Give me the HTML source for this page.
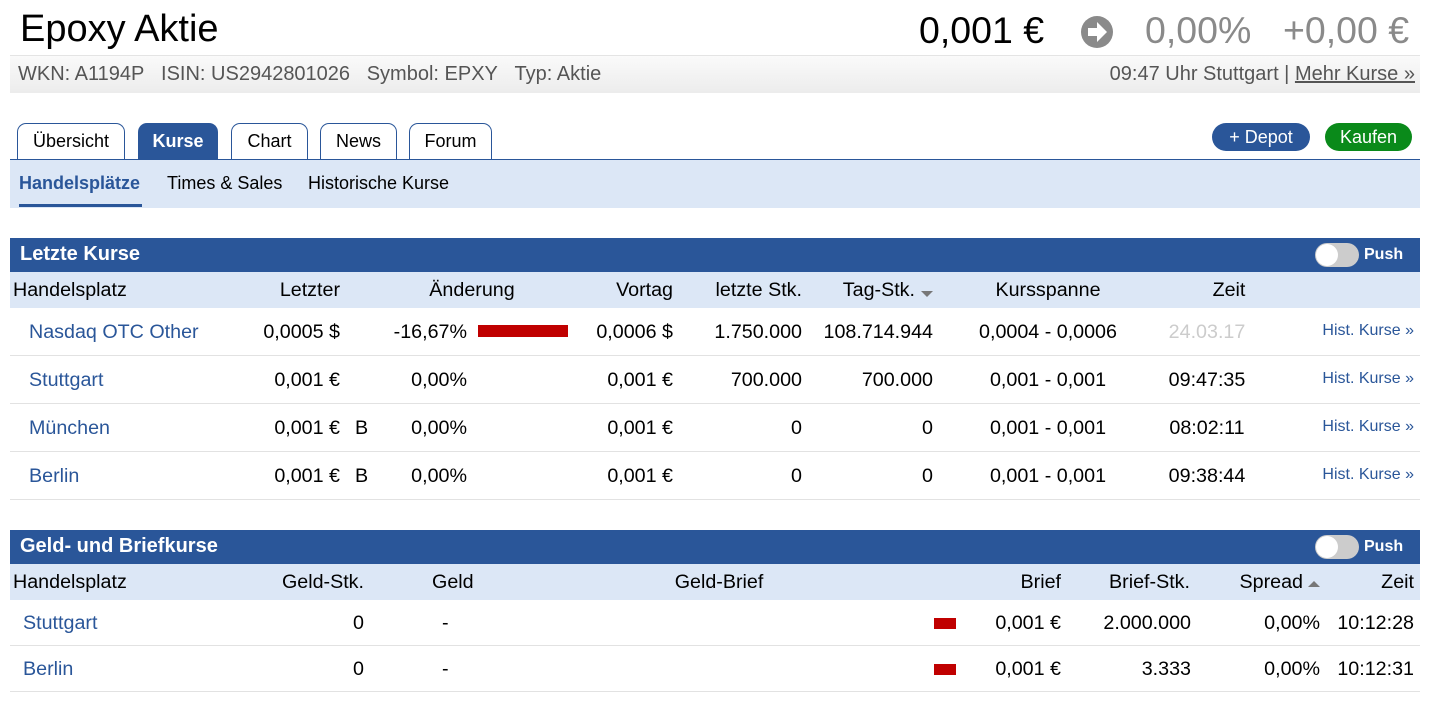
<!DOCTYPE html>
<html><head><meta charset="utf-8"><style>
*{margin:0;padding:0;box-sizing:border-box}
body{width:1431px;height:701px;background:#fff;font-family:"Liberation Sans",Arial,sans-serif;position:relative;overflow:hidden;color:#000}
.a{position:absolute;white-space:nowrap}
.r{text-align:right}
.c{text-align:center}
.lk{color:#2a5699}
.tab{position:absolute;top:123px;height:37px;border:1px solid #2a5699;border-bottom:none;border-radius:9px 9px 0 0;background:#fff;font-size:18px;text-align:center;line-height:34px}
.hd{position:absolute;left:10px;width:1410px;background:#2a5699;color:#fff;font-weight:bold;font-size:20px}
.ch{position:absolute;left:10px;width:1410px;background:#dce7f6}
.row{position:absolute;left:10px;width:1410px;border-bottom:1px solid #e2e2e2}
.t{font-size:19.7px}
.tog{position:absolute;width:44px;height:24px;border-radius:12px;background:#ccc}
.tog:after{content:"";position:absolute;left:1px;top:1px;width:22px;height:22px;border-radius:50%;background:#fff}
</style></head><body>
<div class="a" style="left:20px;top:8px;font-size:38px">Epoxy Aktie</div>
<div class="a" style="left:919px;top:9px;font-size:37.5px">0,001 €</div>
<svg class="a" style="left:1080px;top:15px" width="34" height="34" viewBox="0 0 34 34"><circle cx="17" cy="17" r="16" fill="#8a8a8a"/><path d="M8 13h9v-6l10 10-10 10v-6h-9z" fill="#fff"/></svg>
<div class="a" style="left:1145px;top:9px;font-size:37.5px;color:#8a8a8a">0,00%</div>
<div class="a" style="left:1283px;top:9px;font-size:37.5px;color:#8a8a8a">+0,00 €</div>
<div class="a" style="left:10px;top:55px;width:1410px;height:38px;border-top:1px solid #e4e4e4;background:linear-gradient(#fafafa,#ececec)"></div>
<div class="a" style="left:18px;top:63px;font-size:20px;color:#555">WKN: A1194P&nbsp;&nbsp;&nbsp;ISIN: US2942801026&nbsp;&nbsp;&nbsp;Symbol: EPXY&nbsp;&nbsp;&nbsp;Typ: Aktie</div>
<div class="a r" style="left:900px;width:515px;top:63px;font-size:20px;color:#555">09:47 Uhr Stuttgart | <u>Mehr Kurse »</u></div>

<div class="tab" style="left:17px;width:108px">Übersicht</div>
<div class="tab" style="left:138px;width:80px;background:#2a5699;color:#fff;font-weight:bold">Kurse</div>
<div class="tab" style="left:231px;width:77px">Chart</div>
<div class="tab" style="left:320px;width:77px">News</div>
<div class="tab" style="left:409px;width:83px">Forum</div>
<div class="a c" style="left:1212px;top:123px;width:98px;height:28px;border-radius:14px;background:#2a5699;color:#fff;font-size:18px;line-height:28px">+ Depot</div>
<div class="a c" style="left:1325px;top:123px;width:87px;height:28px;border-radius:14px;background:#0a8a1a;color:#fff;font-size:18px;line-height:28px">Kaufen</div>
<div class="a" style="left:10px;top:159px;width:1410px;height:49px;background:#dce7f6;border-top:1px solid #2a5699"></div>
<div class="a" style="left:19px;top:173px;font-size:18px;font-weight:bold;color:#2a5699">Handelsplätze</div>
<div class="a" style="left:19px;top:204px;width:123px;height:3px;background:#2a5699"></div>
<div class="a" style="left:167px;top:173px;font-size:18px">Times &amp; Sales</div>
<div class="a" style="left:308px;top:173px;font-size:18px">Historische Kurse</div>

<!-- Table 1 -->
<div class="hd" style="top:238px;height:34px;padding:5px 10px">Letzte Kurse</div>
<div class="tog" style="left:1315px;top:243px"></div>
<div class="a" style="left:1364px;top:246px;color:#fff;font-weight:bold;font-size:16px">Push</div>
<div class="ch" style="top:272px;height:36px"></div>
<div class="a t" style="left:13px;top:279px">Handelsplatz</div>
<div class="a t r" style="left:0;width:340px;top:279px">Letzter</div>
<div class="a t c" style="left:372px;width:200px;top:279px">Änderung</div>
<div class="a t r" style="left:0;width:673px;top:279px">Vortag</div>
<div class="a t r" style="left:0;width:802px;top:279px">letzte Stk.</div>
<div class="a t r" style="left:0;width:915px;top:279px">Tag-Stk.</div>
<div class="a" style="left:921px;top:291px;width:0;height:0;border-left:6px solid transparent;border-right:6px solid transparent;border-top:6px solid #777"></div>
<div class="a t c" style="left:948px;width:200px;top:279px">Kursspanne</div>
<div class="a t c" style="left:1179px;width:100px;top:279px">Zeit</div>

<div class="row" style="top:308px;height:48px"></div>
<div class="row" style="top:356px;height:48px"></div>
<div class="row" style="top:404px;height:48px"></div>
<div class="row" style="top:452px;height:48px"></div>

<div class="a t lk" style="left:29px;top:321px">Nasdaq OTC Other</div>
<div class="a t r" style="left:0;width:340px;top:321px">0,0005 $</div>
<div class="a t r" style="left:0;width:467px;top:321px">-16,67%</div>
<div class="a" style="left:478px;top:325px;width:90px;height:12px;background:#c00000"></div>
<div class="a t r" style="left:0;width:673px;top:321px">0,0006 $</div>
<div class="a t r" style="left:0;width:802px;top:321px">1.750.000</div>
<div class="a t r" style="left:0;width:933px;top:321px">108.714.944</div>
<div class="a t c" style="left:948px;width:200px;top:321px">0,0004 - 0,0006</div>
<div class="a t c" style="left:1157px;width:100px;top:321px;color:#ccc">24.03.17</div>
<div class="a r lk" style="left:0;width:1414px;top:322px;font-size:16px">Hist. Kurse »</div>

<div class="a t lk" style="left:29px;top:369px">Stuttgart</div>
<div class="a t r" style="left:0;width:340px;top:369px">0,001 €</div>
<div class="a t r" style="left:0;width:467px;top:369px">0,00%</div>
<div class="a t r" style="left:0;width:673px;top:369px">0,001 €</div>
<div class="a t r" style="left:0;width:802px;top:369px">700.000</div>
<div class="a t r" style="left:0;width:933px;top:369px">700.000</div>
<div class="a t c" style="left:948px;width:200px;top:369px">0,001 - 0,001</div>
<div class="a t c" style="left:1157px;width:100px;top:369px">09:47:35</div>
<div class="a r lk" style="left:0;width:1414px;top:370px;font-size:16px">Hist. Kurse »</div>

<div class="a t lk" style="left:29px;top:417px">München</div>
<div class="a t r" style="left:0;width:340px;top:417px">0,001 €</div>
<div class="a t" style="left:355px;top:417px">B</div>
<div class="a t r" style="left:0;width:467px;top:417px">0,00%</div>
<div class="a t r" style="left:0;width:673px;top:417px">0,001 €</div>
<div class="a t r" style="left:0;width:802px;top:417px">0</div>
<div class="a t r" style="left:0;width:933px;top:417px">0</div>
<div class="a t c" style="left:948px;width:200px;top:417px">0,001 - 0,001</div>
<div class="a t c" style="left:1157px;width:100px;top:417px">08:02:11</div>
<div class="a r lk" style="left:0;width:1414px;top:418px;font-size:16px">Hist. Kurse »</div>

<div class="a t lk" style="left:29px;top:465px">Berlin</div>
<div class="a t r" style="left:0;width:340px;top:465px">0,001 €</div>
<div class="a t" style="left:355px;top:465px">B</div>
<div class="a t r" style="left:0;width:467px;top:465px">0,00%</div>
<div class="a t r" style="left:0;width:673px;top:465px">0,001 €</div>
<div class="a t r" style="left:0;width:802px;top:465px">0</div>
<div class="a t r" style="left:0;width:933px;top:465px">0</div>
<div class="a t c" style="left:948px;width:200px;top:465px">0,001 - 0,001</div>
<div class="a t c" style="left:1157px;width:100px;top:465px">09:38:44</div>
<div class="a r lk" style="left:0;width:1414px;top:466px;font-size:16px">Hist. Kurse »</div>

<!-- Table 2 -->
<div class="hd" style="top:530px;height:34px;padding:5px 10px">Geld- und Briefkurse</div>
<div class="tog" style="left:1315px;top:535px"></div>
<div class="a" style="left:1364px;top:538px;color:#fff;font-weight:bold;font-size:16px">Push</div>
<div class="ch" style="top:564px;height:36px"></div>
<div class="a t" style="left:13px;top:571px">Handelsplatz</div>
<div class="a t r" style="left:0;width:364px;top:571px">Geld-Stk.</div>
<div class="a t" style="left:432px;top:571px">Geld</div>
<div class="a t c" style="left:619px;width:200px;top:571px">Geld-Brief</div>
<div class="a t r" style="left:0;width:1061px;top:571px">Brief</div>
<div class="a t r" style="left:0;width:1190px;top:571px">Brief-Stk.</div>
<div class="a t r" style="left:0;width:1303px;top:571px">Spread</div>
<div class="a" style="left:1308px;top:581px;width:0;height:0;border-left:6px solid transparent;border-right:6px solid transparent;border-bottom:6px solid #777"></div>
<div class="a t r" style="left:0;width:1414px;top:571px">Zeit</div>

<div class="row" style="top:600px;height:46px"></div>
<div class="row" style="top:646px;height:46px"></div>

<div class="a t lk" style="left:23px;top:612px">Stuttgart</div>
<div class="a t r" style="left:0;width:364px;top:612px">0</div>
<div class="a t" style="left:442px;top:612px">-</div>
<div class="a" style="left:934px;top:618px;width:22px;height:11px;background:#c00000"></div>
<div class="a t r" style="left:0;width:1061px;top:612px">0,001 €</div>
<div class="a t r" style="left:0;width:1191px;top:612px">2.000.000</div>
<div class="a t r" style="left:0;width:1320px;top:612px">0,00%</div>
<div class="a t r" style="left:0;width:1414px;top:612px">10:12:28</div>

<div class="a t lk" style="left:23px;top:658px">Berlin</div>
<div class="a t r" style="left:0;width:364px;top:658px">0</div>
<div class="a t" style="left:442px;top:658px">-</div>
<div class="a" style="left:934px;top:664px;width:22px;height:11px;background:#c00000"></div>
<div class="a t r" style="left:0;width:1061px;top:658px">0,001 €</div>
<div class="a t r" style="left:0;width:1191px;top:658px">3.333</div>
<div class="a t r" style="left:0;width:1320px;top:658px">0,00%</div>
<div class="a t r" style="left:0;width:1414px;top:658px">10:12:31</div>
</body></html>
